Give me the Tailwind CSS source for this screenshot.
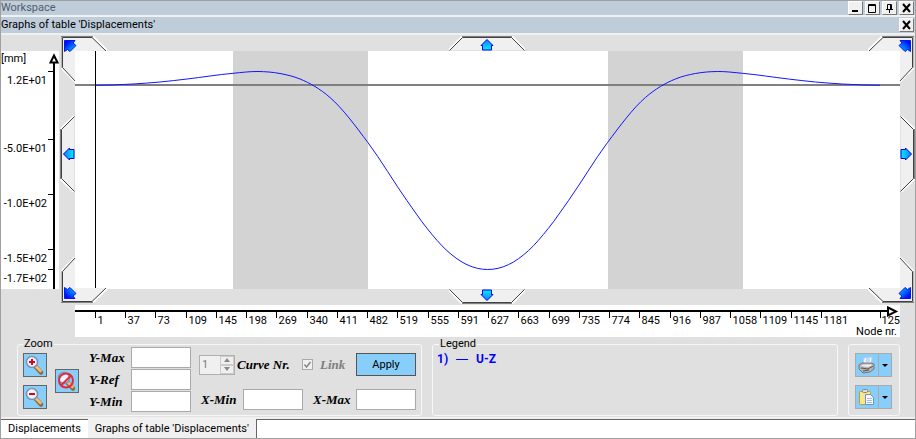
<!DOCTYPE html>
<html lang="en">
<head>
<meta charset="utf-8">
<title>Workspace</title>
<script src="https://cdn.jsdelivr.net/npm/@tailwindcss/browser@4"></script>
</head>
<body class="bg-[#e0e0e0] font-['Roboto',sans-serif] text-[11px] leading-4 text-black">
<svg class="absolute h-0 w-0" aria-hidden="true">
  <defs>
    <linearGradient id="gs" x1="0" y1="0" x2="0" y2="1"><stop offset="0" stop-color="#1478ff"/><stop offset="1" stop-color="#00f0ff"/></linearGradient>
    <linearGradient id="gd" x1="0" y1="0" x2="1" y2="1"><stop offset=".2" stop-color="#0010ff"/><stop offset="1" stop-color="#00d8ff"/></linearGradient>
  </defs>
  <symbol id="corner" viewBox="0 0 46 46">
    <path d="M0 0H31.500L46 15H14V45L0 31Z" fill="#f0f0f0"/>
    <path d="M31.500 0L46 14.500M0 31.500L14 45.500" stroke="#fff" stroke-width="2" fill="none"/>
    <path d="M0 32V.5H32" stroke="#808080" fill="none"/>
    <path d="M14 45L1.500 31.500V1.500H31L45 15" stroke="#404040" fill="none"/>
    <path d="M3.500 4.500H14L12 7L15 9.500L9 15.500L6.500 13.500L3.500 15.500Z" fill="url(#gd)" stroke="#0018f0"/>
  </symbol>
  <symbol id="edge" viewBox="0 0 76 15">
    <path d="M13 0H63L76 14H0Z" fill="#f0f0f0"/>
    <path d="M0 14L13 .5M63 .5L76 14" stroke="#fff" stroke-width="2" fill="none"/>
    <path d="M13 .5H63" stroke="#808080"/>
    <path d="M.5 14.500L13.500 1.500H62.500L75.500 14.500" stroke="#404040" fill="none"/>
    <path d="M38 3.500L44 9.500H42.500V14H33.500V9.500H32Z" fill="url(#gs)" stroke="#0000e8"/>
  </symbol>
  <symbol id="lens" viewBox="0 0 22 22">
    <path d="M11 12L17 18.500" stroke="#936b42" stroke-width="4.500" stroke-linecap="round"/>
    <path d="M11.500 12L16.500 17" stroke="#efbd75" stroke-width="2.500" stroke-linecap="round"/>
    <circle cx="8" cy="8" r="5.500" fill="#e9f5ff" stroke="#8291aa" stroke-width="1.500"/>
    <path d="M4 7A4 4 0 0 1 8 4" stroke="#fff" fill="none"/>
  </symbol>
</svg>

<div class="flex min-h-screen flex-col border border-[#a0a0a0] bg-[#e0e0e0]">
  <header class="flex h-4 items-center justify-between border-b-2 border-[#f0f0f0] bg-[#bfcddb] pr-px text-[#4f5d6c]">
    <h1>Workspace</h1>
    <div class="flex gap-[2px]">
      <button aria-label="Minimize" class="h-[14px] w-[15px] border border-t-white border-l-white border-r-[#777] border-b-[#777] bg-[#f0f0f0]"><svg class="block" width="13" height="12"><path d="M3 9H9" stroke="#000" stroke-width="2"/></svg></button>
      <button aria-label="Maximize" class="h-[14px] w-[15px] border border-t-white border-l-white border-r-[#777] border-b-[#777] bg-[#f0f0f0]"><svg class="block" width="13" height="12" fill="none" stroke="#000"><path d="M2.500 2.500H9.500V10.500H2.500ZM2 3.500H10"/></svg></button>
      <button aria-label="Pin" class="h-[14px] w-[15px] border border-t-white border-l-white border-r-[#777] border-b-[#777] bg-[#f0f0f0]"><svg class="block" width="13" height="12" fill="none" stroke="#000"><path d="M4.500 7V2.500H8.500V7M7.500 2V7M3 7.500H10M6.500 7V11"/></svg></button>
      <button aria-label="Close workspace" class="h-[14px] w-[15px] border border-t-white border-l-white border-r-[#777] border-b-[#777] bg-[#f0f0f0]"><svg class="block" width="13" height="12"><path d="M3 2L10 10M10 2L3 10" stroke="#000" stroke-width="2"/></svg></button>
    </div>
  </header>
  <header class="flex h-[18px] items-center justify-between border-b-2 border-[#f0f0f0] bg-[#bfcddb] pr-px">
    <h2>Graphs of table 'Displacements'</h2>
    <button aria-label="Close graphs" class="h-[14px] w-[15px] border border-t-white border-l-white border-r-[#777] border-b-[#777] bg-[#f0f0f0]"><svg class="block" width="13" height="12"><path d="M3 2L10 10M10 2L3 10" stroke="#000" stroke-width="2"/></svg></button>
  </header>

  <main class="flex flex-1 flex-col">
    <section class="flex min-h-[270px] flex-1" aria-label="Graph">
      <div class="flex w-[58px] shrink-0 py-4">
        <svg id="yaxis" class="w-full self-stretch bg-white">
          <text x="0" y="11">[mm]</text>
          <path d="M53 4.500L56.500 11.500H49.500Z" fill="#fff" stroke="#000" stroke-width="2"/>
          <line x1="53" x2="53" y1="12" y2="100%" stroke="#000" stroke-width="2"/>
        </svg>
      </div>
      <div class="relative flex flex-1 py-4 pr-[15px] pl-4">
        <svg id="plot" class="h-[238px] min-h-full w-full bg-white" viewBox="0 0 825 238" preserveAspectRatio="none" fill="none">
          <path d="M158 0H293V238H158ZM533 0H668V238H533Z" fill="#d3d3d3"/>
          <path d="M0 34H825" stroke="#808080" stroke-width="2" vector-effect="non-scaling-stroke"/>
          <path d="M20.500 0V238" stroke="#000" vector-effect="non-scaling-stroke"/>
          <path id="curve" stroke="#1414ff" vector-effect="non-scaling-stroke"/>
        </svg>
        <button aria-label="Move up left" class="absolute top-px left-[2px]"><svg class="block" width="46" height="46"><use href="#corner"/></svg></button>
        <button aria-label="Move up right" class="absolute top-px right-px -scale-x-100"><svg class="block" width="46" height="46"><use href="#corner"/></svg></button>
        <button aria-label="Move down left" class="absolute bottom-[2px] left-[2px] -scale-y-100"><svg class="block" width="46" height="46"><use href="#corner"/></svg></button>
        <button aria-label="Move down right" class="absolute right-px bottom-[2px] rotate-180"><svg class="block" width="46" height="46"><use href="#corner"/></svg></button>
        <div class="absolute inset-x-0 top-px flex justify-center"><button aria-label="Move up"><svg class="block" width="76" height="15"><use href="#edge"/></svg></button></div>
        <div class="absolute inset-x-0 bottom-px flex justify-center"><button aria-label="Move down" class="rotate-180"><svg class="block" width="76" height="15"><use href="#edge"/></svg></button></div>
        <button aria-label="Move left" class="absolute top-[30%] left-px"><svg class="block" width="15" height="76"><use href="#edge" width="76" height="15" transform="translate(0 76) rotate(-90)"/></svg></button>
        <button aria-label="Move right" class="absolute top-[30%] right-0"><svg class="block" width="15" height="76"><use href="#edge" width="76" height="15" transform="translate(15 0) rotate(90)"/></svg></button>
      </div>
    </section>

    <div class="mr-[15px] ml-[74px] flex h-8">
      <svg id="xaxis" class="h-8 w-full bg-white">
        <line x1="0" x2="99%" y1="6" y2="6" stroke="#000" stroke-width="2"/>
        <svg x="100%" class="overflow-visible"><path d="M-12 2.500L-4 6.500L-12 10.500Z" fill="#fff" stroke="#000" stroke-width="2"/><text x="0" y="19" text-anchor="end">125</text><text x="-3" y="30" text-anchor="end">Node nr.</text></svg>
      </svg>
    </div>

    <form class="flex gap-[10px] pt-px pr-[15px] pb-px pl-4" onsubmit="return false">
      <fieldset class="flex w-[405px] shrink-0 flex-col rounded-[3px] border border-[#f4f8fb] px-[5px] pb-[3px]">
        <legend class="px-px leading-3">Zoom</legend>
        <div class="-mt-[3px] flex">
          <div class="mt-[6px] flex h-14 items-center gap-2">
            <div class="flex flex-col gap-2">
              <button type="button" aria-label="Zoom in" class="h-6 w-6 border border-[#666] bg-[#87cefa]"><svg width="22" height="22" fill="none"><use href="#lens"/><path d="M8 5V11M5 8H11" stroke="#e00020" stroke-width="2"/></svg></button>
              <button type="button" aria-label="Zoom out" class="h-6 w-6 border border-[#666] bg-[#87cefa]"><svg width="22" height="22" fill="none"><use href="#lens"/><path d="M5 8H11" stroke="#e00020" stroke-width="2"/></svg></button>
            </div>
            <button type="button" aria-label="Reset zoom" class="h-6 w-6 border border-[#666] bg-[#87cefa]"><svg width="22" height="22" fill="none"><use href="#lens"/><circle cx="10" cy="10.500" r="7" stroke="#e8283c" stroke-width="2"/><path d="M15 5.500L5 15.500" stroke="#e8283c" stroke-width="2"/></svg></button>
          </div>
          <div class="ml-[10px] grid grid-cols-[42px_60px] items-center gap-y-px font-['Liberation_Serif',serif] text-[13px] font-bold italic">
            <label for="ymax">Y-Max</label><input id="ymax" class="h-[21px] w-full border border-[#aaa] bg-white">
            <label for="yref">Y-Ref</label><input id="yref" class="h-[21px] w-full border border-[#aaa] bg-white">
            <label for="ymin">Y-Min</label><input id="ymin" class="h-[21px] w-full border border-[#aaa] bg-white">
          </div>
          <div class="ml-2 flex flex-1 flex-col justify-between pt-[6px] pb-[2px] font-['Liberation_Serif',serif] text-[13px] font-bold italic">
            <div class="flex items-center">
              <div class="flex h-5 w-9 border border-[#b0b0b0] bg-[#f0f0f0]">
                <input id="curvenr" value="1" disabled class="min-w-0 flex-1 bg-[#f0f0f0] pl-[2px] font-['Roboto',sans-serif] text-[11px] font-normal text-[#7d7d7d] not-italic">
                <div class="flex w-[14px] flex-col">
                  <button type="button" disabled aria-label="Increase" class="flex-1 border border-[#ccc]"><svg class="mx-auto block" width="6" height="4"><path d="M0 4L3 0L6 4Z" fill="#888"/></svg></button>
                  <button type="button" disabled aria-label="Decrease" class="flex-1 border border-[#ccc]"><svg class="mx-auto block" width="6" height="4"><path d="M0 0L3 4L6 0Z" fill="#888"/></svg></button>
                </div>
              </div>
              <label for="curvenr" class="ml-[2px] w-[65px]">Curve Nr.</label>
              <span class="relative flex">
                <input id="link" type="checkbox" checked disabled class="h-[11px] w-[11px] appearance-none border border-[#aaa] bg-[#f0f0f0]">
                <svg class="pointer-events-none absolute inset-0" width="11" height="11"><path d="M2.500 5.500L4.500 8L8.500 3" stroke="#888" stroke-width="1.500" fill="none"/></svg>
              </span>
              <label for="link" class="ml-[7px] text-[#7d7d7d]">Link</label>
              <button type="submit" class="ml-auto h-[23px] w-[60px] border border-[#555] bg-[#87cefa] font-['Roboto',sans-serif] text-[11px] font-normal not-italic">Apply</button>
            </div>
            <div class="flex items-center">
              <label for="xmin" class="w-11 pl-[2px] whitespace-nowrap">X-Min</label><input id="xmin" class="h-[21px] w-[60px] border border-[#aaa] bg-white">
              <label for="xmax" class="ml-[10px]">X-Max</label><input id="xmax" class="ml-auto h-[21px] w-[60px] border border-[#aaa] bg-white">
            </div>
          </div>
        </div>
      </fieldset>
      <fieldset class="flex-1 rounded-[3px] border border-[#f4f8fb] px-1">
        <legend class="ml-[2px] px-px leading-3">Legend</legend>
        <p class="flex gap-2 pt-px text-[12px] font-bold text-[#0000ff]"><span>1)</span><span class="font-['Liberation_Sans',sans-serif] font-normal">—</span><span>U-Z</span></p>
      </fieldset>
      <div role="group" aria-label="Output" class="mt-[6px] flex w-[52px] flex-col gap-2 rounded-[3px] border border-[#f4f8fb] px-[6px] pt-2">
        <div class="flex">
          <button type="button" aria-label="Print" class="h-6 w-6 border border-[#aaa] bg-[#87cefa]"><svg width="22" height="22">
            <path d="M8 4L16 3L15 11H7Z" fill="#f4faff" stroke="#b4d0f4"/><path d="M10 5H14M9.500 7H14" stroke="#9bd"/>
            <path d="M3 11L6 9H15L18 10V15L14 18L7 19L3 15Z" fill="#b4b4b4" stroke="#777"/><path d="M4 12L8 10.500H15L17 11L12 13Z" fill="#eee"/><path d="M5 14L12 15L17 12M7 17L13 16" stroke="#555" fill="none"/></svg></button>
          <button type="button" aria-label="Print options" class="-ml-px h-6 w-[14px] border border-[#aaa] bg-[#87cefa]"><svg class="mx-auto" width="6" height="22"><path d="M0 10H6L3 13Z"/></svg></button>
        </div>
        <div class="flex">
          <button type="button" aria-label="Copy" class="h-6 w-6 border border-[#aaa] bg-[#87cefa]"><svg width="22" height="22">
            <rect x="3.500" y="5.500" width="11" height="13" rx="1" fill="#ffe58a" stroke="#c29b2a"/><rect x="6.500" y="3.500" width="5" height="3" rx="1" fill="#ddd" stroke="#888"/>
            <path d="M9.500 8.500H14.500L17.500 11.500V18.500H9.500Z" fill="#f6faff" stroke="#7092c8"/><path d="M11 12.500H16M11 14.500H16M11 16.500H16" stroke="#a4bce4"/></svg></button>
          <button type="button" aria-label="Copy options" class="-ml-px h-6 w-[14px] border border-[#aaa] bg-[#87cefa]"><svg class="mx-auto" width="6" height="22"><path d="M0 10H6L3 13Z"/></svg></button>
        </div>
      </div>
    </form>
  </main>

  <nav class="flex h-[21px] bg-[#f0f0f0] pt-[2px]" aria-label="Tabs">
    <a href="#" class="border-t border-[#666] bg-white px-[7px] leading-[18px]">Displacements</a>
    <a href="#" aria-current="page" class="border-t border-[#f0f0f0] px-[7px] leading-[18px]">Graphs of table 'Displacements'</a>
    <div class="flex-1 border-t border-l border-[#666] bg-white"></div>
  </nav>
</div>

<script>
  const NS = 'http://www.w3.org/2000/svg';
  function add(parent, tag, attrs, text) {
    const el = document.createElementNS(NS, tag);
    for (const k in attrs) el.setAttribute(k, attrs[k]);
    if (text) el.textContent = text;
    parent.appendChild(el);
    return el;
  }

  // Half of the symmetric displacement curve, in plot units
  const half = [[20.5,34.3],[58,33],[85,31],[112,28],[158,22.3],[183,20.5],[205,22.5],[225,28],[255,46.5],[293,91.7],[332,149.7],[352,177.3],[372,199.7],[392,213.7],[412.7,218.5]];
  const pts = half.concat(half.slice(0, -1).reverse().map(([x, y]) => [825.4 - x, y]));
  // Hermite spline with tangents weighted by the spacing of the points
  const chord = i => (pts[i + 1][1] - pts[i][1]) / (pts[i + 1][0] - pts[i][0]);
  const slope = pts.map((p, i) => {
    if (i === 0) return 0;
    if (i === pts.length - 1) return 0;
    const h0 = p[0] - pts[i - 1][0], h1 = pts[i + 1][0] - p[0];
    return (chord(i - 1) * h1 + chord(i) * h0) / (h0 + h1);
  });
  let d = 'M' + pts[0];
  for (let i = 0; i < pts.length - 1; i++) {
    const [x0, y0] = pts[i], [x1, y1] = pts[i + 1], h = (x1 - x0) / 3;
    d += ` C${x0 + h},${y0 + slope[i] * h} ${x1 - h},${y1 - slope[i + 1] * h} ${x1},${y1}`;
  }
  document.getElementById('curve').setAttribute('d', d);

  const yaxis = document.getElementById('yaxis');
  [['1.2E+01', 20.5], ['-5.0E+01', 88.5], ['-1.0E+02', 143.5], ['-1.5E+02', 198.5], ['-1.7E+02', 218.5]].forEach(([label, y]) => {
    const g = add(yaxis, 'svg', { y: y / 2.38 + '%', class: 'overflow-visible' });
    add(g, 'path', { d: 'M47 0H53', stroke: '#000' });
    add(g, 'text', { x: 46, y: 12, 'text-anchor': 'end' }, label);
  });

  const xaxis = document.getElementById('xaxis');
  const nodes = [1,37,73,109,145,198,269,340,411,482,519,555,591,627,663,699,735,774,845,916,987,1058,1109,1145,1181];
  const ticks = nodes.map((n, i) => [String(n), Math.round(20 + i * 30.24) + 0.5]);
  ticks.push(['', 805.5]);
  ticks.forEach(([n, x]) => {
    const g = add(xaxis, 'svg', { x: x / 8.25 + '%', class: 'overflow-visible' });
    add(g, 'path', { d: 'M0 7V13', stroke: '#000' });
    if (n) add(g, 'text', { x: 2, y: 19 }, n);
  });
</script>
</body>
</html>
